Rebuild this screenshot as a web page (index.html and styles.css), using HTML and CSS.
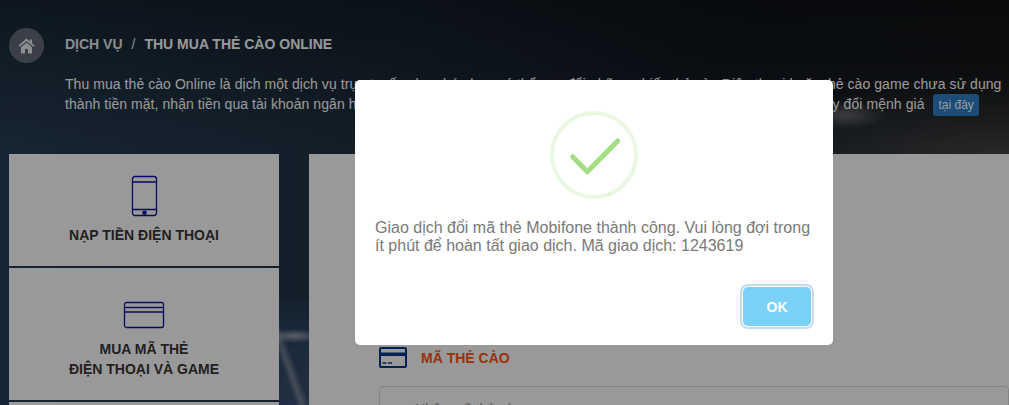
FILE: index.html
```html
<!DOCTYPE html>
<html lang="vi">
<head>
  <meta charset="UTF-8" />
  <meta name="viewport" content="width=device-width, initial-scale=1.0"/>
  <title>Thu mua thẻ cào Online</title>
  <link rel="stylesheet" href="styles.css">
</head>
<body>
  <div class="page">
    <div class="crumbs">
      <span class="home">
        <svg width="17" height="16" viewBox="0 0 17 16"><path d="M8.500 0.500 L0.500 7.500 L1.700 8.800 L8.500 3 L15.300 8.800 L16.500 7.500 L14 5.300 V1.500 H12 V3.500 Z" fill="#ebedf0"/><path d="M3 9.200 L8.500 4.500 L14 9.200 V15.500 H10 V11 H7 V15.500 H3 Z" fill="#ebedf0"/></svg>
      </span>
      <span class="crumb">DỊCH VỤ</span>
      <span class="crumb sep">/</span>
      <span class="crumb now">THU MUA THẺ CÀO ONLINE</span>
    </div>

    <p class="intro">Thu mua thẻ cào Online là dịch một dịch vụ trực tuyến cho phép bạn có thể quy đổi những chiếc thẻ cào Điện thoại hoặc thẻ cào game chưa sử dụng<br>thành tiền mặt, nhận tiền qua tài khoản ngân hàng hoặc ví điện tử một cách nhanh chóng và an toàn. Xem tiết bảng phí quy đổi mệnh giá <a class="tag">tại đây</a></p>

    <div class="main">
      <div class="side">
        <div class="side-item first">
          <svg width="28" height="42" viewBox="0 0 28 42" fill="none" stroke="#12129d" stroke-width="1.300"><rect x="2.500" y="1.500" width="24" height="39" rx="2.500"/><path d="M2.500 7 H26.500 M2.500 34.500 H26.500"/><circle cx="14.500" cy="37.700" r="2.300" fill="#12129d" stroke="none"/></svg>
          <span>NẠP TIỀN ĐIỆN THOẠI</span>
        </div>
        <div class="side-item second">
          <svg width="42" height="28" viewBox="0 0 42 28" fill="none" stroke="#12129d" stroke-width="1.300"><rect x="1.500" y="1.500" width="39" height="25" rx="2"/><path d="M1.500 6.500 H40.500 M1.500 11 H40.500"/></svg>
          <span>MUA MÃ THẺ<br>ĐIỆN THOẠI VÀ GAME</span>
        </div>
        <div class="side-item rest"></div>
      </div>

      <div class="panel">
        <div class="card-title">
          <svg width="28" height="21" viewBox="0 0 28 21"><rect width="28" height="21" rx="2" fill="#07378f"/><rect x="2" y="2" width="24" height="3.500" fill="#fff"/><rect x="2" y="9" width="24" height="10" fill="#fff"/><path d="M3.500 16 H7.500 M9 16 H13" stroke="#07378f" stroke-width="1.500"/></svg>
          <span>MÃ THẺ CÀO</span>
        </div>
        <div class="card-input">Nhập mã thẻ cào</div>
      </div>
    </div>
  </div>

  <div class="overlay">
    <div class="dialog">
      <svg class="tick" width="90" height="90" viewBox="0 0 90 90" fill="none">
        <circle cx="45" cy="45" r="42" stroke="#eaf7e3" stroke-width="4"/>
        <path d="M6 26 L8 28 M58 85 L63 83" stroke="#d5ecc8" stroke-width="0.800"/>
        <path d="M23.700 46.700 L38.300 61.700 L68.700 31" stroke="#a5dc86" stroke-width="5" stroke-linecap="round" stroke-linejoin="round"/>
      </svg>
      <p class="msg">Giao dịch đổi mã thẻ Mobifone thành công. Vui lòng đợi trong ít phút để hoàn tất giao dịch. Mã giao dịch: 1243619</p>
      <div class="actions">
        <button class="ok">OK</button>
      </div>
    </div>
  </div>
</body>
</html>
```

FILE: styles.css
```css
* {
  box-sizing: border-box;
}

html, body {
  height: 100%;
}

body {
  margin: 0;
  overflow: hidden;
  font-family: 'Liberation Sans', Arial, sans-serif;
  background-color: #1f3040;
  background-repeat: no-repeat;
  background-image:
    linear-gradient(70deg, transparent 16px, rgba(190,190,185,0.45) 22px, transparent 29px),
    radial-gradient(ellipse 30px 7px at 15px 36px, rgba(220,225,230,0.6), transparent),
    linear-gradient(180deg, #243a4e, #2c4562 40%, #3a4f6e),
    radial-gradient(ellipse 42px 14px at 845px 115px, rgba(200,200,200,0.4), transparent),
    linear-gradient(180deg, rgba(0,0,0,0.4), rgba(0,0,0,0) 150px),
    radial-gradient(ellipse 320px 90px at 1009px 165px, rgba(100,100,100,0.6), transparent),
    linear-gradient(90deg, #263f55, #1f3040 40%, #171e28 70%, #1a1d20);
  background-position: 279px 300px, 279px 300px, 279px 300px, 0 0, 0 0, 0 0, 0 0;
  background-size: 30px 105px, 30px 105px, 30px 105px, 100% 100%, 100% 100%, 100% 100%, 100% 100%;
}

.page {
  height: 100%;
  padding: 28px 0 0 9px;
}

.crumbs {
  display: flex;
  align-items: center;
  height: 35px;
  font-size: 14px;
  font-weight: bold;
}

.home {
  display: flex;
  align-items: center;
  justify-content: center;
  width: 35px;
  height: 35px;
  margin-right: 21px;
  border-radius: 50%;
  background: #616b75;
}

.crumb {
  padding-bottom: 3px;
  color: #e8eaed;
}

.crumb.sep {
  margin: 0 9px;
  font-weight: normal;
}

.crumb.now {
  color: #fff;
}

.intro {
  margin: 11px 0 0 56px;
  font-size: 14px;
  line-height: 20px;
  letter-spacing: 0.06px;
  white-space: nowrap;
  color: #fff;
}

.tag {
  display: inline-block;
  padding: 0 5px;
  margin-left: 5px;
  font-size: 12px;
  line-height: 22px;
  letter-spacing: 0;
  border-radius: 3px;
  background: #307fc8;
  color: #fff;
}

.main {
  display: flex;
  gap: 30px;
  height: 251px;
  margin-top: 38px;
}

.side {
  width: 270px;
  flex: none;
  display: flex;
  flex-direction: column;
  gap: 2px;
}

.side-item {
  display: flex;
  flex-direction: column;
  align-items: center;
  background: #fff;
  color: #3a3635;
  font-size: 14px;
  font-weight: bold;
  line-height: 20px;
  text-align: center;
}

.side-item.first {
  height: 112px;
  padding-top: 21px;
}

.side-item.first span {
  margin-top: 8px;
}

.side-item.second {
  height: 132px;
  padding-top: 33px;
}

.side-item.second span {
  margin-top: 10px;
}

.side-item.rest {
  flex: 1;
}

.panel {
  flex: 1;
  overflow: hidden;
  padding: 193px 0 0 70px;
  background: #fff;
}

.card-title {
  display: flex;
  align-items: center;
  gap: 14px;
  color: #ff5412;
  font-size: 14px;
  font-weight: bold;
}

.card-input {
  height: 50px;
  margin-top: 18px;
  padding: 14px 35px;
  border: 1px solid #ddd;
  border-radius: 4px;
  font-size: 14px;
  color: #999;
}

.overlay {
  position: fixed;
  top: 0;
  left: 0;
  right: 0;
  bottom: 0;
  padding: 80px 0 0 355px;
  background: rgba(0,0,0,0.4);
}

.dialog {
  width: 478px;
  height: 265px;
  padding: 30px 20px 0;
  background: #fff;
  border-radius: 5px;
}

.tick {
  display: block;
  margin: 0 auto;
}

.msg {
  margin: 19px 0 0;
  font-size: 16px;
  line-height: 18px;
  color: #797979;
}

.actions {
  display: flex;
  justify-content: flex-end;
  margin-top: 32px;
  padding-right: 2px;
}

.ok {
  width: 68px;
  height: 39px;
  border: none;
  border-radius: 5px;
  background: #7cd1f9;
  box-shadow: 0 0 0 1px #fff, 0 0 0 3px #c6dcec;
  color: #fff;
  font-family: inherit;
  font-size: 14px;
  font-weight: bold;
}
```
